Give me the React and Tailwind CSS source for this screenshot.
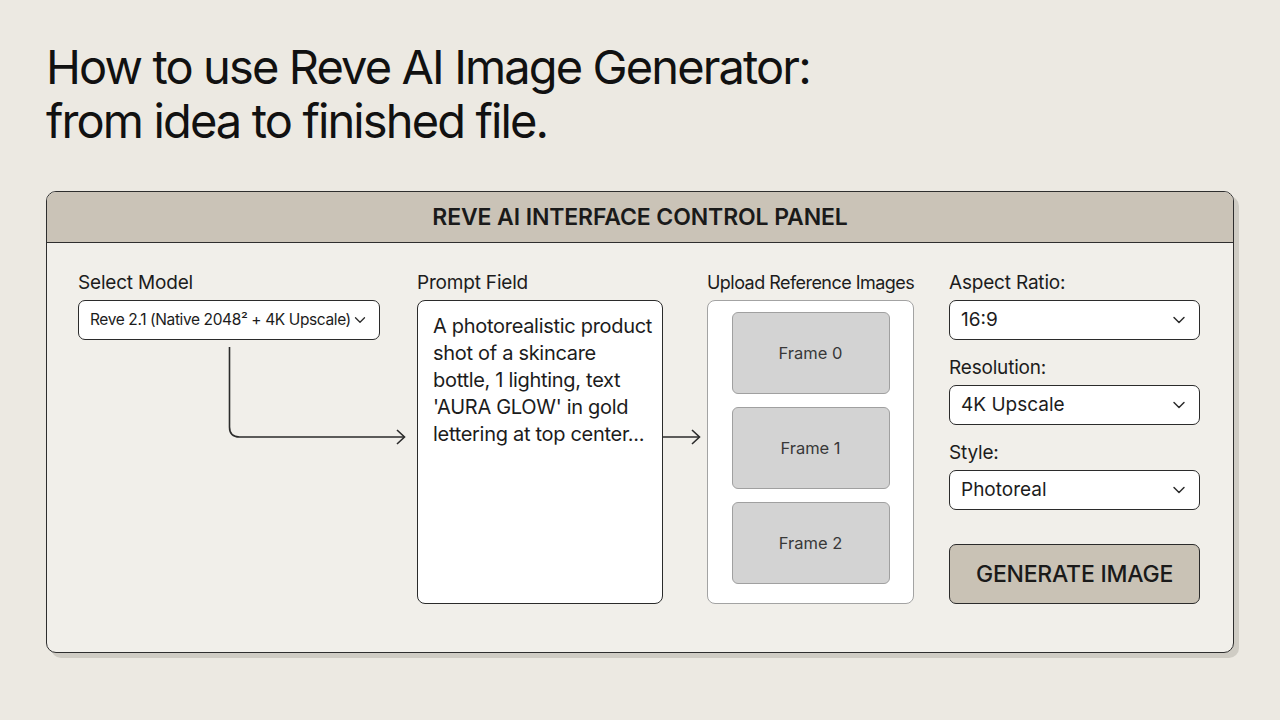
import { ChevronDown } from 'lucide-react';

const sans = { fontFamily: 'Inter, "Noto Sans", sans-serif' };

const frames = ['Frame 0', 'Frame 1', 'Frame 2'];

function Select({ value, textClass = 'text-[19px]', iconClass = 'w-5 h-5' }) {
    return (
        <div className="flex items-center justify-between h-10 bg-white border-[1.5px] border-[#2b2b2b] rounded-[7px] pl-[11px] pr-[10px]">
            <span className={`${textClass} text-[#1c1c1c] whitespace-nowrap`}>{value}</span>
            <ChevronDown className={`${iconClass} text-[#2b2b2b] shrink-0`} strokeWidth={1.75} />
        </div>
    );
}

function Label({ children, className = 'text-[19px] tracking-[-0.01em]' }) {
    return <p className={`leading-6 text-[#1c1c1c] whitespace-nowrap mb-[5px] ${className}`}>{children}</p>;
}

export default function App() {
    return (
        <div className="w-[1280px] h-[720px] bg-[#ece9e2] overflow-hidden" style={sans}>
            {/* Heading */}
            <h1 className="pl-[46px] pt-[40px] text-[47px] leading-[54px] font-normal text-[#111] tracking-[-0.04em]">
                How to use Reve AI Image Generator:
                <br />
                from idea to finished file.
            </h1>

            {/* Control panel */}
            <div className="ml-[46px] mt-[43px] w-[1188px] h-[462px] bg-[#f1efea] border-[1.5px] border-[#2e2e2e] rounded-[10px] shadow-[5px_5px_0_#cfccc4] overflow-hidden flex flex-col">
                <div className="h-[51px] shrink-0 bg-[#cac3b7] border-b-[1.5px] border-[#2e2e2e] flex items-center justify-center">
                    <span className="text-[23px] font-semibold text-[#1a1a1a] tracking-[-0.005em]">
                        REVE AI INTERFACE CONTROL PANEL
                    </span>
                </div>

                <div className="relative flex-1 flex pl-[31px] pt-[28px]">
                    {/* connectors */}
                    <svg className="absolute inset-0 w-full h-full pointer-events-none" fill="none" stroke="#2b2b2b" strokeWidth="1.6">
                        <path d="M182.5 104 V184 Q182.5 194 192.5 194 H357" />
                        <path d="M350 187 L357.5 194 L350 201" />
                        <path d="M615.5 194 H652" />
                        <path d="M645 187 L652.5 194 L645 201" />
                    </svg>

                    {/* model */}
                    <div className="w-[302px]">
                        <Label>Select Model</Label>
                        <Select
                            value="Reve 2.1 (Native 2048² + 4K Upscale)"
                            textClass="text-[15.5px] tracking-[-0.025em]"
                            iconClass="w-[18px] h-[18px]"
                        />
                    </div>

                    {/* prompt */}
                    <div className="w-[246px] ml-[37px]">
                        <Label>Prompt Field</Label>
                        <div className="h-[304px] bg-white border-[1.5px] border-[#2b2b2b] rounded-[8px] pl-[15px] pr-2 pt-[12px]">
                            <p className="text-[20px] leading-[27px] text-[#1c1c1c] tracking-[-0.015em]">
                                A photorealistic product shot of a skincare bottle, 1 lighting, text 'AURA GLOW' in gold
                                lettering at top center...
                            </p>
                        </div>
                    </div>

                    {/* reference images */}
                    <div className="w-[207px] ml-[44px]">
                        <Label className="text-[18px] tracking-[-0.03em]">Upload Reference Images</Label>
                        <div className="h-[304px] bg-white border-[1.5px] border-[#a3a3a3] rounded-[8px] pt-[11px] flex flex-col items-center gap-[13px]">
                            {frames.map((f) => (
                                <div
                                    key={f}
                                    className="w-[158px] h-[82px] bg-[#d3d3d3] border border-[#a0a0a0] rounded-[6px] flex items-center justify-center"
                                >
                                    <span className="text-[16.5px] text-[#383838]">{f}</span>
                                </div>
                            ))}
                        </div>
                    </div>

                    {/* settings */}
                    <div className="w-[251px] ml-[35px]">
                        <Label>Aspect Ratio:</Label>
                        <Select value="16:9" />
                        <Label className="mt-[16px] text-[19px] tracking-[-0.01em]">Resolution:</Label>
                        <Select value="4K Upscale" />
                        <Label className="mt-[16px] text-[19px] tracking-[-0.01em]">Style:</Label>
                        <Select value="Photoreal" />
                        <button className="mt-[34px] w-full h-[60px] bg-[#c9c2b5] border-[1.5px] border-[#2b2b2b] rounded-[7px] text-[23px] font-medium text-[#1a1a1a] tracking-[-0.01em]">
                            GENERATE IMAGE
                        </button>
                    </div>
                </div>
            </div>
        </div>
    );
}
